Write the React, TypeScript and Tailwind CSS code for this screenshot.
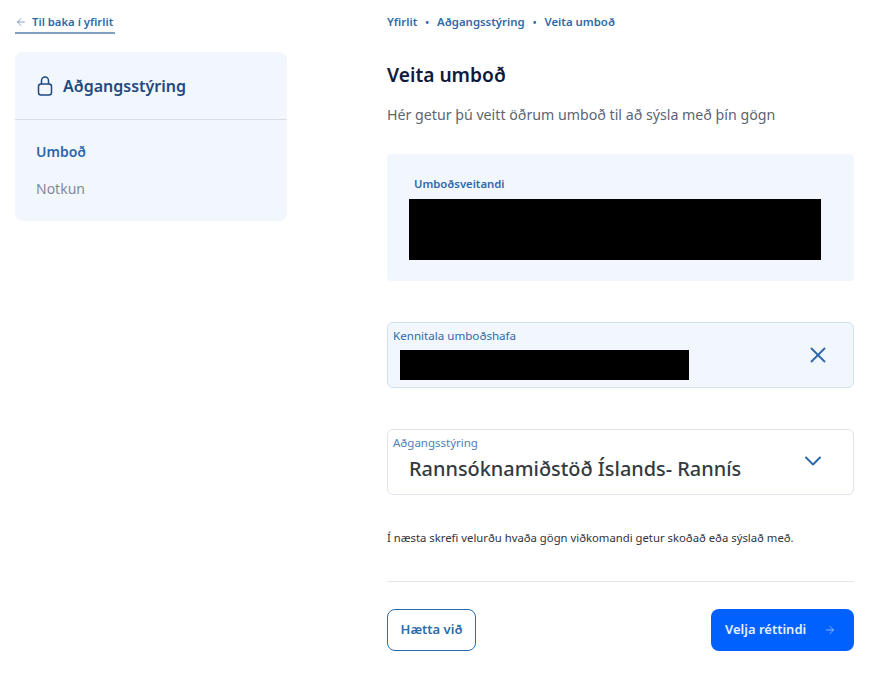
import { ArrowLeft, ArrowRight, ChevronDown, X } from 'lucide-react';

export default function App() {
  return (
    <div className="flex h-[690px] w-[889px] overflow-hidden bg-white pl-[15px] font-['Noto_Sans',sans-serif]">
      {/* Sidebar */}
      <aside className="w-[272px] shrink-0 pt-[12px]">
        <a className="flex h-[22px] w-[100px] items-center gap-[5px] whitespace-nowrap border-b-2 border-[#7fa0c0] text-[11.3px] font-semibold text-[#2f6aa8]">
          <ArrowLeft className="h-[12px] w-[12px] text-[#5c87b5]" strokeWidth={1.5} />
          Til baka í yfirlit
        </a>
        <div className="mt-[18px] h-[169px] rounded-lg bg-[#f2f6fd]">
          <div className="flex h-[68px] items-center gap-[10px] border-b border-[#d9dfe9] pl-[22px]">
            <svg viewBox="0 0 16 20" className="h-[20px] w-[16px] text-[#1f4a80]" fill="none" stroke="currentColor" strokeWidth="1.5">
              <rect x="1.5" y="8" width="13" height="11" rx="2.5" />
              <path d="M4.5 8V4.5a3.5 3.5 0 0 1 7 0V8" />
            </svg>
            <span className="text-[16px] font-semibold text-[#1f4a80]">Aðgangsstýring</span>
          </div>
          <div className="flex flex-col gap-[19px] pl-[21px] pt-[23px]">
            <span className="text-[14px] leading-[18px] font-semibold text-[#2c66ab]">Umboð</span>
            <span className="text-[14px] leading-[18px] text-[#7e8a9c]">Notkun</span>
          </div>
        </div>
      </aside>

      {/* Main */}
      <main className="ml-[100px] w-[467px] shrink-0 pt-[14px]">
        <nav className="flex h-[16px] items-center gap-[8px] text-[11.4px] font-semibold text-[#2f6aa8]">
          <span>Yfirlit</span>
          <span className="text-[10px]">•</span>
          <span>Aðgangsstýring</span>
          <span className="text-[10px]">•</span>
          <span>Veita umboð</span>
        </nav>
        <h1 className="mt-[31px] text-[19.2px] leading-[28px] font-semibold text-[#0f1a3d]">Veita umboð</h1>
        <p className="mt-[16px] whitespace-nowrap text-[14.2px] leading-[20px] text-[#5b6474]">
          Hér getur þú veitt öðrum umboð til að sýsla með þín gögn
        </p>

        <section className="mt-[29px] h-[127px] rounded bg-[#f2f6fd] pl-[22px] pt-[23px]">
          <div className="pl-[5px] text-[11.3px] leading-[14px] font-semibold text-[#2f6aa8]">Umboðsveitandi</div>
          <div className="mt-[8px] h-[61px] w-[412px] bg-black" />
        </section>

        <div className="mt-[41px] flex h-[66px] rounded-md border border-[#d3e0ee] bg-[#f2f6fd]">
          <div className="flex-1 pl-[5px] pt-[5px]">
            <div className="text-[11.6px] leading-[16px] text-[#2f6aa8]">Kennitala umboðshafa</div>
            <div className="ml-[7px] mt-[6px] h-[30px] w-[289px] bg-black" />
          </div>
          <X className="mr-[22px] mt-[19px] h-[26px] w-[26px] text-[#2f6aa8]" strokeWidth={1.75} />
        </div>

        <div className="mt-[41px] flex h-[66px] rounded-md border border-[#dfe4ea] bg-white">
          <div className="flex-1 pl-[5px] pt-[5px]">
            <div className="text-[11.5px] leading-[16px] text-[#4f80b5]">Aðgangsstýring</div>
            <div className="ml-[16px] mt-[5px] whitespace-nowrap text-[19.9px] leading-[26px] font-medium text-[#333a40]">
              Rannsóknamiðstöð Íslands- Rannís
            </div>
          </div>
          <ChevronDown className="mr-[26px] mt-[17px] h-[28px] w-[28px] text-[#2f6aa8]" strokeWidth={1.75} />
        </div>

        <p className="mt-[35px] whitespace-nowrap text-[11.3px] leading-[16px] text-[#30343c]">
          Í næsta skrefi velurðu hvaða gögn viðkomandi getur skoðað eða sýslað með.
        </p>

        <hr className="mt-[35px] border-t border-[#e3e8ee]" />

        <div className="mt-[27px] flex justify-between">
          <button className="h-[42px] w-[89px] rounded-lg border border-[#2f6aa8] bg-white text-[13px] font-semibold text-[#2f6aa8]">
            Hætta við
          </button>
          <button className="flex h-[42px] w-[143px] items-center justify-between rounded-lg bg-[#0061ff] pl-[14px] pr-[18px] text-[13px] font-semibold text-[#e6f0ff]">
            Velja réttindi
            <ArrowRight className="h-[12px] w-[12px] text-[#b5d2ff]" strokeWidth={1.5} />
          </button>
        </div>
      </main>
    </div>
  );
}
